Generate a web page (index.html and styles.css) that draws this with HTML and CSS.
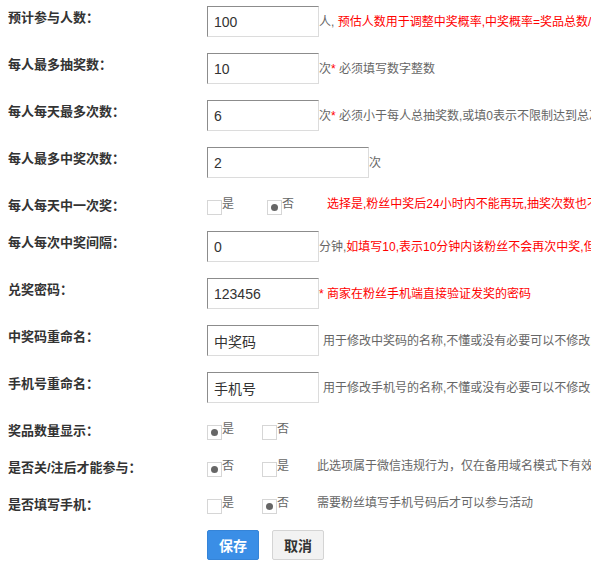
FILE: index.html
```html
<!DOCTYPE html>
<html lang="zh-CN">
<head>
<meta charset="utf-8">
<title>抽奖设置</title>
<link rel="stylesheet" href="styles.css">
</head>
<body>
<div class="form">
  <div class="row">
    <div class="lbl">预计参与人数：</div>
    <div class="ctl"><input class="inp" type="text" value="100"><span class="tip">人, <span class="red">预估人数用于调整中奖概率,中奖概率=奖品总数/预估人数</span></span></div>
  </div>
  <div class="row">
    <div class="lbl">每人最多抽奖数：</div>
    <div class="ctl"><input class="inp" type="text" value="10"><span class="tip">次<span class="red">*</span> 必须填写数字整数</span></div>
  </div>
  <div class="row">
    <div class="lbl">每人每天最多次数：</div>
    <div class="ctl"><input class="inp" type="text" value="6"><span class="tip">次<span class="red">*</span> 必须小于每人总抽奖数,或填0表示不限制达到总次数</span></div>
  </div>
  <div class="row">
    <div class="lbl">每人最多中奖次数：</div>
    <div class="ctl"><input class="inp inp-wide" type="text" value="2"><span class="tip">次</span></div>
  </div>
  <div class="row radio-row">
    <div class="lbl">每人每天中一次奖：</div>
    <div class="ctl-radio">
      <span class="opt opt-wide"><span class="box"></span><span class="otxt">是</span></span>
      <span class="opt opt-wide"><span class="box on"></span><span class="otxt">否</span></span>
      <span class="rtip red">选择是,粉丝中奖后24小时内不能再玩,抽奖次数也不会增加</span>
    </div>
  </div>
  <div class="row">
    <div class="lbl">每人每次中奖间隔：</div>
    <div class="ctl"><input class="inp" type="text" value="0"><span class="tip">分钟,<span class="red">如填写10,表示10分钟内该粉丝不会再次中奖,但可以继续抽奖</span></span></div>
  </div>
  <div class="row">
    <div class="lbl">兑奖密码：</div>
    <div class="ctl"><input class="inp" type="text" value="123456"><span class="tip red">* 商家在粉丝手机端直接验证发奖的密码</span></div>
  </div>
  <div class="row">
    <div class="lbl">中奖码重命名：</div>
    <div class="ctl"><input class="inp" type="text" value="中奖码"><span class="tip tip-gap">用于修改中奖码的名称,不懂或没有必要可以不修改.</span></div>
  </div>
  <div class="row">
    <div class="lbl">手机号重命名：</div>
    <div class="ctl"><input class="inp" type="text" value="手机号"><span class="tip tip-gap">用于修改手机号的名称,不懂或没有必要可以不修改.</span></div>
  </div>
  <div class="row radio-row">
    <div class="lbl">奖品数量显示：</div>
    <div class="ctl-radio">
      <span class="opt"><span class="box on"></span><span class="otxt">是</span></span>
      <span class="opt"><span class="box"></span><span class="otxt">否</span></span>
    </div>
  </div>
  <div class="row radio-row">
    <div class="lbl">是否关/注后才能参与：</div>
    <div class="ctl-radio">
      <span class="opt"><span class="box on"></span><span class="otxt">否</span></span>
      <span class="opt"><span class="box"></span><span class="otxt">是</span></span>
      <span class="rtip">此选项属于微信违规行为，仅在备用域名模式下有效</span>
    </div>
  </div>
  <div class="row radio-row">
    <div class="lbl">是否填写手机：</div>
    <div class="ctl-radio">
      <span class="opt"><span class="box"></span><span class="otxt">是</span></span>
      <span class="opt"><span class="box on"></span><span class="otxt">否</span></span>
      <span class="rtip">需要粉丝填写手机号码后才可以参与活动</span>
    </div>
  </div>
  <div class="row btn-row">
    <div class="lbl"></div>
    <div class="btns">
      <button class="btn btn-primary" type="button">保存</button>
      <button class="btn btn-default" type="button">取消</button>
    </div>
  </div>
</div>
</body>
</html>
```
FILE: styles.css
```css
html, body {
  margin: 0;
  padding: 0;
  background: #fff;
  overflow: hidden;
}
body {
  font-family: "Liberation Sans", "Noto Sans CJK SC", sans-serif;
  color: #333;
  width: 591px;
  height: 567px;
}
.form {
  padding: 6px 0 0 8px;
}
.row {
  display: flex;
  align-items: flex-start;
  white-space: nowrap;
  margin-bottom: 16px;
}
.lbl {
  flex: 0 0 199px;
  width: 199px;
  padding-top: 5px;
  font-size: 13px;
  line-height: 14px;
  font-weight: bold;
  color: #333;
}
.ctl {
  display: flex;
  align-items: center;
  height: 31px;
}
.inp {
  box-sizing: border-box;
  width: 112px;
  height: 31px;
  margin: 0;
  padding: 0 6px;
  font-family: "Liberation Sans", "Noto Sans CJK SC", sans-serif;
  font-size: 14px;
  color: #333;
  background: #fff;
  border-style: solid;
  border-width: 1px;
  border-color: #8c8c8c #dcdcdc #dcdcdc #8c8c8c;
  outline: none;
}
.inp-wide {
  width: 162px;
}
.tip {
  font-size: 12px;
  line-height: 14px;
  color: #666;
}
.tip-gap {
  margin-left: 4px;
}
.red {
  color: #f00;
}
.radio-row {
  height: 21px;
}
.ctl-radio {
  display: flex;
  align-items: flex-start;
  height: 21px;
}
.opt {
  display: flex;
  align-items: flex-start;
  margin-right: 28px;
}
.opt-wide {
  margin-right: 33px;
}
.box {
  box-sizing: border-box;
  width: 15px;
  height: 15px;
  margin-top: 6px;
  border: 1px solid #d6d6d6;
  background: #fff;
  display: flex;
  align-items: center;
  justify-content: center;
}
.box.on::after {
  content: "";
  width: 7px;
  height: 7px;
  border-radius: 50%;
  background: #666;
}
.otxt {
  margin-top: 3px;
  font-size: 12px;
  line-height: 14px;
  color: #666;
}
.rtip {
  margin-top: 3px;
  font-size: 12px;
  line-height: 14px;
  color: #666;
}
.rtip.red {
  color: #f00;
}
.btns {
  display: flex;
  gap: 13px;
}
.btn {
  box-sizing: border-box;
  width: 52px;
  height: 30px;
  margin: 0;
  padding: 0;
  border-radius: 2px;
  font-family: "Liberation Sans", "Noto Sans CJK SC", sans-serif;
  font-size: 14px;
  font-weight: bold;
  cursor: pointer;
}
.btn-primary {
  background: #3a8ee6;
  border: 1px solid #3584d8;
  color: #fff;
}
.btn-default {
  background: #f2f2f2;
  border: 1px solid #d4d4d4;
  color: #333;
}
```
